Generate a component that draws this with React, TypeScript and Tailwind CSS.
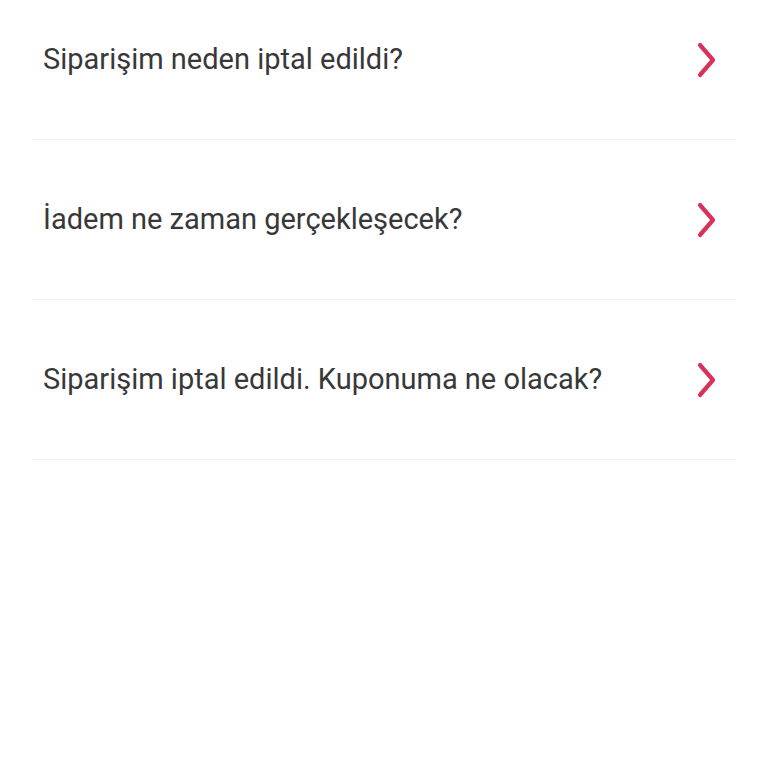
const questions = [
  "Siparişim neden iptal edildi?",
  "İadem ne zaman gerçekleşecek?",
  "Siparişim iptal edildi. Kuponuma ne olacak?",
];

function Chevron() {
  return (
    <svg width="22" height="38" viewBox="0 0 22 38" fill="none" className="shrink-0">
      <path d="M4 4 L17 19 L4 34" stroke="#d5335b" strokeWidth="4.2" strokeLinecap="round" strokeLinejoin="round" />
    </svg>
  );
}

export default function App() {
  return (
    <div className="min-h-[768px] bg-white px-8 font-['Roboto',sans-serif]">
      <ul className="-mt-[20px]">
        {questions.map((q) => (
          <li key={q} className="flex h-[160px] items-center justify-between border-b border-[#eeeeee] pl-[11px] pr-[18px]">
            <span className="text-[29px] leading-none text-[#383838]">{q}</span>
            <Chevron />
          </li>
        ))}
      </ul>
    </div>
  );
}
